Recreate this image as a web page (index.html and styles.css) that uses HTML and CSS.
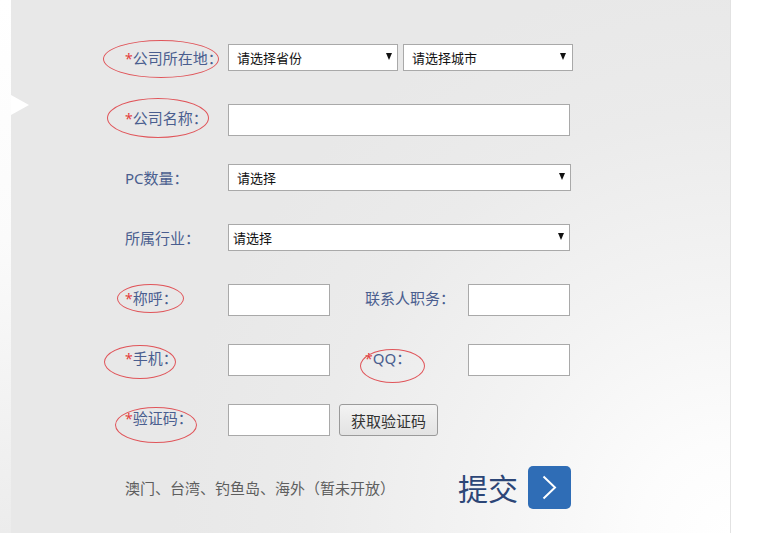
FILE: index.html
```html
<!DOCTYPE html>
<html lang="zh-CN">
<head>
<meta charset="utf-8">
<title>申请表单</title>
<link rel="stylesheet" href="styles.css">
</head>
<body>
<div class="page">
  <div class="strip"></div>
  <div class="panel">
    <span class="pointer"></span>
    <form class="form">
      <div class="row">
        <label class="label"><span class="req">*</span>公司所在地：<span class="mark mark-1"></span></label>
        <span class="sel sel-half"><select><option>请选择省份</option></select></span>
        <span class="sel sel-half sel-gap"><select><option>请选择城市</option></select></span>
      </div>
      <div class="row">
        <label class="label"><span class="req">*</span>公司名称：<span class="mark mark-2"></span></label>
        <input class="input input-long" type="text">
      </div>
      <div class="row">
        <label class="label">PC数量：</label>
        <span class="sel sel-full"><select><option>请选择</option></select></span>
      </div>
      <div class="row">
        <label class="label">所属行业：</label>
        <span class="sel sel-full sel-tight"><select><option>请选择</option></select></span>
      </div>
      <div class="row">
        <label class="label"><span class="req">*</span>称呼：<span class="mark mark-3"></span></label>
        <input class="input input-short" type="text">
        <label class="label label-2">联系人职务：</label>
        <input class="input input-short" type="text">
      </div>
      <div class="row">
        <label class="label"><span class="req">*</span>手机：<span class="mark mark-4"></span></label>
        <input class="input input-short" type="text">
        <label class="label label-2"><span class="req">*</span>QQ：<span class="mark mark-5"></span></label>
        <input class="input input-short" type="text">
      </div>
      <div class="row">
        <label class="label"><span class="req">*</span>验证码：<span class="mark mark-6"></span></label>
        <input class="input input-short" type="text">
        <button class="code-btn" type="button">获取验证码</button>
      </div>
      <div class="row row-submit">
        <span class="note">澳门、台湾、钓鱼岛、海外（暂未开放）</span>
        <span class="submit-text">提交</span>
        <button class="submit-btn" type="button" aria-label="提交">
          <svg width="43" height="43" viewBox="0 0 43 43"><path d="M15.5 10.5 L27 21.5 L15.5 32.5" fill="none" stroke="#fff" stroke-width="2"/></svg>
        </button>
      </div>
    </form>
  </div>
</div>
</body>
</html>
```

FILE: styles.css
```css
* { box-sizing: border-box; }

html, body {
  margin: 0;
  padding: 0;
  background: #fff;
}

body {
  width: 779px;
  height: 533px;
  overflow: hidden;
  font-family: "Noto Sans", "Noto Sans CJK SC", sans-serif;
}

.page {
  display: flex;
  height: 533px;
}

.strip {
  width: 11px;
  flex: none;
  background: linear-gradient(to bottom, #ffffff 0%, #fbfbfb 45%, #ececec 100%);
}

.panel {
  position: relative;
  width: 720px;
  flex: none;
  height: 533px;
  padding: 44px 0 0 114px;
  background:
    radial-gradient(circle at 100% 100%, #ffffff 0px, #fcfcfc 90px, #f3f3f3 250px, #ebebeb 420px, #e8e8e8 560px);
  border-right: 1px solid #e2e2e2;
}

.pointer {
  position: absolute;
  left: 0;
  top: 95px;
  width: 0;
  height: 0;
  border-left: 18px solid #fff;
  border-top: 10px solid transparent;
  border-bottom: 10px solid transparent;
}

.form {
  display: flex;
  flex-direction: column;
}

.row {
  display: flex;
  align-items: flex-start;
  height: 32px;
  margin-bottom: 28px;
}

.label {
  position: relative;
  width: 103px;
  flex: none;
  font-size: 15px;
  line-height: 28px;
  color: #4a5e8f;
  white-space: nowrap;
  font-family: "Noto Sans", "Noto Sans CJK SC", sans-serif;
}

.label-2 {
  margin-left: 35px;
}

.req {
  color: #e4403c;
  font-size: 14px;
}

.mark {
  position: absolute;
  border: 1px solid #e0555a;
  border-radius: 50%;
  pointer-events: none;
}

.mark-1 { left: -22px; top: -4px; width: 116px; height: 38px; }
.mark-2 { left: -18px; top: -6px; width: 102px; height: 40px; }
.mark-3 { left: -8px; top: 0px; width: 67px; height: 29px; }
.mark-4 { left: -21px; top: 1px; width: 72px; height: 34px; }
.mark-5 { left: -5px; top: 5px; width: 65px; height: 34px; }
.mark-6 { left: -10px; top: 3px; width: 82px; height: 36px; }

.sel {
  position: relative;
  display: block;
  flex: none;
  height: 27px;
}

.sel::after {
  content: "";
  position: absolute;
  right: 6px;
  top: 9px;
  width: 0;
  height: 0;
  border-top: 7px solid #111;
  border-left: 3px solid transparent;
  border-right: 3px solid transparent;
}

.sel select {
  -webkit-appearance: none;
  appearance: none;
  display: block;
  width: 100%;
  height: 27px;
  margin: 0;
  border: 1px solid #a9a9a9;
  border-radius: 0;
  background: #fff;
  padding: 0 0 0 8px;
  font-family: "Noto Sans", "Noto Sans CJK SC", sans-serif;
  font-size: 13px;
  color: #111;
}

.sel-half { width: 170px; }
.sel-gap { margin-left: 5px; }
.sel-gap::after { right: 7px; }
.sel-full { width: 343px; }
.sel-tight { width: 342px; }
.sel-tight select { padding-left: 4px; }

.input {
  flex: none;
  height: 32px;
  margin: 0;
  border: 1px solid #a9a9a9;
  background: #fff;
  padding: 0 6px;
  font-size: 14px;
  border-radius: 0;
}

.input-long { width: 342px; }
.input-short { width: 102px; }

.code-btn {
  flex: none;
  margin-left: 9px;
  width: 99px;
  height: 32px;
  border: 1px solid #9a9a9a;
  border-radius: 3px;
  background: linear-gradient(to bottom, #f3f3f3, #e3e3e3);
  font-family: "Noto Sans", "Noto Sans CJK SC", sans-serif;
  font-size: 15px;
  color: #333;
  padding: 0;
}

.row-submit {
  align-items: center;
  height: 46px;
  margin-bottom: 0;
}

.note {
  width: 333px;
  flex: none;
  font-size: 15px;
  color: #5e5e5e;
  white-space: nowrap;
  font-family: "Noto Sans CJK SC", sans-serif;
}

.submit-text {
  flex: none;
  font-size: 30px;
  line-height: 40px;
  color: #2c4677;
  font-family: "Noto Sans CJK SC", sans-serif;
}

.submit-btn {
  flex: none;
  margin-left: 10px;
  width: 43px;
  height: 43px;
  padding: 0;
  border: none;
  border-radius: 5px;
  background: #2f6db6;
  display: flex;
  align-items: center;
  justify-content: center;
}

.submit-btn svg { display: block; }
```
